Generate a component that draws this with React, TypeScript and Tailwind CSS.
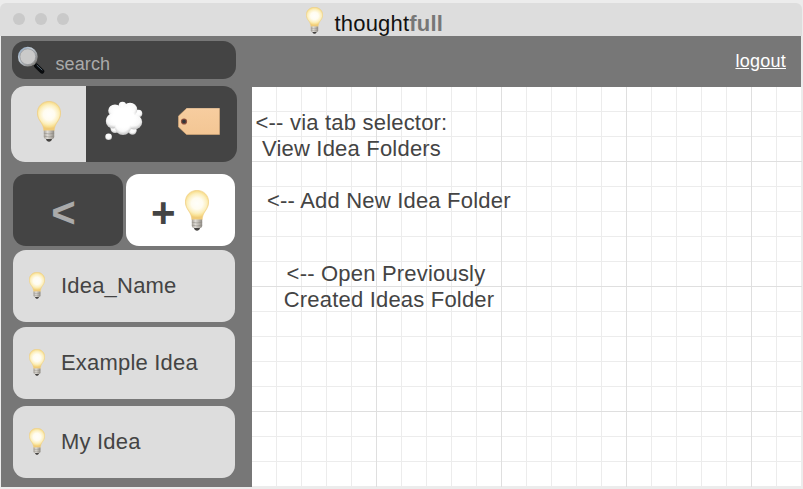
import { useId } from "react";

function Bulb({ className }: { className: string }) {
  const id = useId().replace(/:/g, "");
  return (
    <svg viewBox="0 0 24 41" preserveAspectRatio="none" className={className} aria-hidden="true">
      <defs>
        <radialGradient id={`${id}g`} gradientUnits="userSpaceOnUse" cx="12" cy="13.500" r="14">
          <stop offset="0" stopColor="#fffefa" />
          <stop offset="0.4" stopColor="#fffcf0" />
          <stop offset="0.7" stopColor="#fcefbd" />
          <stop offset="0.88" stopColor="#f8de8e" />
          <stop offset="1" stopColor="#f0cb78" />
        </radialGradient>
        <linearGradient id={`${id}m`}>
          <stop offset="0" stopColor="#a5a098" />
          <stop offset="0.35" stopColor="#dedbd6" />
          <stop offset="0.65" stopColor="#bcb8b1" />
          <stop offset="1" stopColor="#8f8b85" />
        </linearGradient>
      </defs>
      <path d="M12 .4C5.3.4.4 5.400.4 12c0 4.400 2.100 7.200 4.100 10.200 1.700 2.600 2.200 5 2.400 7.600h10.200c.2-2.600.7-5 2.400-7.600 2-3 4.100-5.800 4.100-10.200C23.600 5.400 18.700.4 12 .4Z" fill={`url(#${id}g)`} stroke="#efcc7b" strokeWidth=".7" />
      <path d="M6.800 29.500h10.400v6.500c0 1.200-1.200 2-2.400 2.300H9.200C8 38 6.800 37.200 6.800 36Z" fill={`url(#${id}m)`} />
      <path d="M6.800 32.200q5.200 1.500 10.400 0M6.800 35.200q5.200 1.500 10.400 0" fill="none" stroke="#8b867f" strokeWidth=".5" />
      <path d="M9 38h6c-.3 1.700-1.700 2.800-3 2.800s-2.700-1.100-3-2.800Z" fill="#454341" />
    </svg>
  );
}

function Magnifier() {
  return (
    <svg viewBox="0 0 28 28" className="h-7 w-7 shrink-0" aria-hidden="true">
      <defs>
        <linearGradient id="rim" x1="0" y1="0" x2="1" y2="1">
          <stop offset="0" stopColor="#7f9bb9" />
          <stop offset=".35" stopColor="#c6d0da" />
          <stop offset="1" stopColor="#77736d" />
        </linearGradient>
      </defs>
      <path d="m16.500 17 4 4" stroke="#a5a9ac" strokeWidth="2" />
      <path d="m19.300 19.800 5.700 5.500" stroke="#090b0d" strokeWidth="4.600" strokeLinecap="round" />
      <path d="m20 19.300 5 4.700" stroke="#5f7180" strokeWidth=".9" strokeLinecap="round" />
      <circle cx="10.800" cy="10.700" r="9" fill="#cacaca" stroke="url(#rim)" strokeWidth="1.800" />
      <circle cx="10.800" cy="10.700" r="7.900" fill="none" stroke="#777b80" strokeWidth=".5" />
    </svg>
  );
}

function Thought() {
  return (
    <svg viewBox="0 0 38 40" className="h-10 w-[38px]" aria-hidden="true">
      <defs>
        <radialGradient id="puff" cx=".48" cy=".36" r=".66">
          <stop offset="0" stopColor="#fff" />
          <stop offset=".6" stopColor="#f8f8f8" />
          <stop offset="1" stopColor="#bcbcbc" />
        </radialGradient>
        <radialGradient id="core">
          <stop offset="0" stopColor="#fff" />
          <stop offset=".7" stopColor="#fff" />
          <stop offset="1" stopColor="#fff" stopOpacity="0" />
        </radialGradient>
      </defs>
      <g fill="url(#puff)">
        <circle cx="17.500" cy="4.500" r="3.800" />
        <circle cx="33.500" cy="12.500" r="3.800" />
        <circle cx="27.500" cy="29.500" r="4.200" />
        <circle cx="10" cy="27.500" r="4.500" />
        <ellipse cx="10" cy="9.800" rx="6.800" ry="6.300" />
        <ellipse cx="25" cy="8.500" rx="7.300" ry="6.800" />
        <ellipse cx="8" cy="20" rx="7.200" ry="7.500" />
        <ellipse cx="29" cy="21" rx="8.200" ry="7.500" />
        <ellipse cx="18" cy="26.500" rx="8" ry="7.500" />
        <circle cx="3.600" cy="35.800" r="3.300" />
      </g>
      <ellipse cx="18.500" cy="16.500" rx="15" ry="13.500" fill="url(#core)" />
    </svg>
  );
}

function Tag() {
  return (
    <svg viewBox="0 0 42 27" className="h-[27px] w-[42px]" aria-hidden="true">
      <defs>
        <linearGradient id="paper" x2="0" y2="1">
          <stop offset="0" stopColor="#f7cd9f" />
          <stop offset="1" stopColor="#f3c694" />
        </linearGradient>
      </defs>
      <path d="M8.500.5h33v26h-33l-8-7.500V8Z" fill="url(#paper)" stroke="#dcad7b" strokeWidth=".6" />
      <path d="M8.500.8h32.800" stroke="#fbd9b3" strokeWidth=".7" />
      <circle cx="6" cy="13.500" r="2.500" fill="#343538" stroke="#8e513d" strokeWidth="1.200" />
    </svg>
  );
}

function Idea({ name }: { name: string }) {
  return (
    <li className="flex h-[72px] items-center rounded-[13px] bg-[#ddd] pb-[2px] pl-4 text-[22px] tracking-[0.2px]">
      <Bulb className="h-[27px] w-4 shrink-0" />
      <span className="ml-4">{name}</span>
    </li>
  );
}

export default function App() {
  return (
    <div className="h-[489px] w-[803px] overflow-hidden bg-[#ececec] font-['Liberation_Sans',Arial,sans-serif] text-[#444]">
      <div className="pt-[3px]">
        <header className="flex h-[33px] w-[802px] rounded-t-md bg-[#ddd]">
          <div className="flex w-[306px] gap-[10px] pt-[10px] pl-[13px]">
            <i className="size-3 rounded-full bg-[#c9c9c9]" />
            <i className="size-3 rounded-full bg-[#c9c9c9]" />
            <i className="size-3 rounded-full bg-[#c9c9c9]" />
          </div>
          <Bulb className="mt-1 h-[27px] w-[17px]" />
          <h1 className="mt-2 ml-[11.5px] text-[22px] leading-[26px] tracking-[0.2px] text-[#111]">
            thought<b className="text-[#777]">full</b>
          </h1>
        </header>
        <main className="ml-px flex h-[451px] w-[801px]">
          <aside className="w-[251px] bg-[#777] pt-[5px]">
            <div className="ml-[11px] flex h-[38px] w-56 rounded-[13px] bg-[#444] pt-[5px] pl-[5px]">
              <Magnifier />
              <span className="mt-[7px] ml-[10.500px] text-lg leading-[22px] tracking-[0.1px] text-[#aaa]">search</span>
            </div>
            <nav className="mt-[7px] ml-[10px] flex h-[76px] w-[226px] overflow-hidden rounded-[14px] bg-[#444]">
              <div className="w-[75px] bg-[#ddd] pt-[15px] pl-[26px]"><Bulb className="h-[41px] w-6" /></div>
              <div className="w-[75px] pt-[15px] pl-[19px]"><Thought /></div>
              <div className="pt-[22px] pl-[17px]"><Tag /></div>
            </nav>
            <div className="mt-3 ml-3 flex h-[72px] gap-[3px] text-[42px] font-bold">
              <button className="w-[110px] rounded-[13px] bg-[#444] pt-[5px] pr-[9px] text-[#aaa]">&lt;</button>
              <button className="flex w-[109px] rounded-[13px] bg-white pt-4 pl-[25px]">
                <span className="w-[34px] text-left leading-[45px]">+</span>
                <Bulb className="h-[41px] w-6" />
              </button>
            </div>
            <ul className="mt-1 ml-3 w-[222px]">
              <Idea name="Idea_Name" />
              <li className="h-[5px]" />
              <Idea name="Example Idea" />
              <li className="h-[7px]" />
              <Idea name="My Idea" />
            </ul>
          </aside>
          <section className="w-[550px]">
            <div className="flex h-[51px] w-[549px] justify-end bg-[#777] pt-[14px] pr-[15px]">
              <a href="#" className="text-lg leading-[22px] tracking-[0.25px] text-white underline">logout</a>
            </div>
            <div className="h-[400px] bg-white bg-[linear-gradient(90deg,#dfdfdf_1px,transparent_1px),linear-gradient(#dfdfdf_1px,transparent_1px),linear-gradient(90deg,#ececec_1px,transparent_1px),linear-gradient(#ececec_1px,transparent_1px)] bg-[length:125px_125px,125px_125px,25px_25px,25px_25px] bg-[position:124px_74px,124px_74px,24px_24px,24px_24px] pt-[23px] text-[22px] leading-[26px] tracking-[0.2px]">
              <p className="w-[199px] text-center">&lt;-- via tab selector:<br />View Idea Folders</p>
              <p className="mt-[26px] ml-[15px]">&lt;-- Add New Idea Folder</p>
              <p className="mt-[47px] ml-[27px] w-[220px] text-center"><span className="mr-[6px]">&lt;-- Open Previously</span><br />Created Ideas Folder</p>
            </div>
          </section>
        </main>
      </div>
    </div>
  );
}
